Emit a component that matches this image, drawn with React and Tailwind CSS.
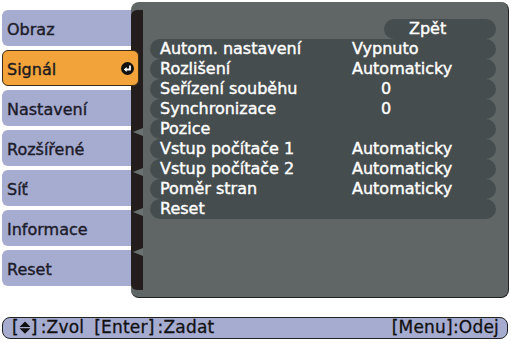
import React from "react";

const font = { fontFamily: '"DejaVu Sans", Verdana, sans-serif' };

const menu = ["Obraz", "Signál", "Nastavení", "Rozšířené", "Síť", "Informace", "Reset"];
const rows = [
  ["Autom. nastavení", "Vypnuto", false],
  ["Rozlišení", "Automaticky", false],
  ["Seřízení souběhu", "0", true],
  ["Synchronizace", "0", true],
  ["Pozice", "", false],
  ["Vstup počítače 1", "Automaticky", false],
  ["Vstup počítače 2", "Automaticky", false],
  ["Poměr stran", "Automaticky", false],
  ["Reset", "", false],
];

function EnterIcon() {
  return (
    <svg width="13" height="13" viewBox="0 0 13 13">
      <circle cx="6.5" cy="6.5" r="6.5" fill="#111" />
      <path d="M9 3.5 V7.5 H4.8" stroke="#fff" strokeWidth="1.8" fill="none" />
      <path d="M2.8 7.5 L5.6 5 L5.6 10 Z" fill="#fff" />
    </svg>
  );
}

function UpDown() {
  return (
    <svg width="12" height="13" viewBox="0 0 12 13" className="inline-block align-[-1px]">
      <path d="M6 0.5 L11.5 6 H0.5 Z" fill="#111" />
      <path d="M0.5 7.2 H11.5 L6 12.7 Z" fill="#111" />
    </svg>
  );
}

export default function App() {
  return (
    <div className="w-[511px] h-[343px] bg-white relative overflow-hidden" style={font}>
      <div className="flex items-start pl-[2px]">
        {/* left menu */}
        <div className="mt-[10px] w-[129px] flex flex-col gap-[4px] relative z-10 [-webkit-text-stroke:0.4px_#1c1c2a]">
          {menu.map((m) =>
            m === "Signál" ? (
              <div
                key={m}
                className="h-[36px] w-[137px] rounded-[6px] bg-[#f2a43a] border border-[#3d2d12] flex items-center justify-between pl-[4px] pr-[4px] text-[16px] text-[#1c1a18] pt-[3px]"
              >
                <span>{m}</span>
                <span className="mt-[-2px]">
                  <EnterIcon />
                </span>
              </div>
            ) : (
              <div
                key={m}
                className="h-[36px] w-[129px] rounded-l-[6px] bg-[#a6abd0] flex items-center pl-[5px] text-[16px] text-[#1c1c2a] pt-[3px]"
              >
                {m}
              </div>
            )
          )}
        </div>

        {/* right panel */}
        <div className="mt-[2px] w-[378px] h-[296px] bg-[#5f6665] rounded-[8px] border-r border-b border-[#222] flex">
          <div className="relative mt-[8px] mb-[7px] w-[12px] bg-[#231e1d] rounded-bl-[6px] rounded-tl-[6px]">
            {[118, 158, 198, 238].map((t) => (
              <div
                key={t}
                className="absolute left-[2px] w-0 h-0 border-y-[4px] border-y-transparent border-r-[10px] border-r-[#6a7171]"
                style={{ top: t }}
              />
            ))}
          </div>
          <div className="flex-1 flex flex-col pt-[17px] pl-[7px] pr-[12px] [-webkit-text-stroke:0.4px_white]">
            <div className="flex justify-end">
              <div className="h-[20px] w-[112px] rounded-full bg-[#464d4e] text-white text-[16px] leading-[20px] pl-[25px]">
                Zpět
              </div>
            </div>
            {rows.map(([l, v, z]) => (
              <div
                key={l}
                className="h-[20px] rounded-full bg-[#464d4e] flex text-white text-[16px] leading-[20px] pl-[10px]"
              >
                <span className="w-[192px] shrink-0">{l}</span>
                <span className={z ? "pl-[29px]" : ""}>{v}</span>
              </div>
            ))}
          </div>
        </div>
      </div>

      {/* footer */}
      <div className="absolute left-[2px] top-[317px] w-[506px] h-[22px] rounded-[8px] bg-[#a6abd0] border border-[#222] flex items-center justify-between pl-[9px] pr-[8px] text-[17px] text-[#111] tracking-[0.2px] [-webkit-text-stroke:0.3px_#111]">
        <div className="flex items-center">
          <span>
            [<UpDown />]
          </span>
          <span className="ml-[3px]">:Zvol</span>
          <span className="ml-[10px]">[Enter]</span>
          <span className="ml-[3px]">:Zadat</span>
        </div>
        <span>[Menu]:Odej</span>
      </div>
    </div>
  );
}
